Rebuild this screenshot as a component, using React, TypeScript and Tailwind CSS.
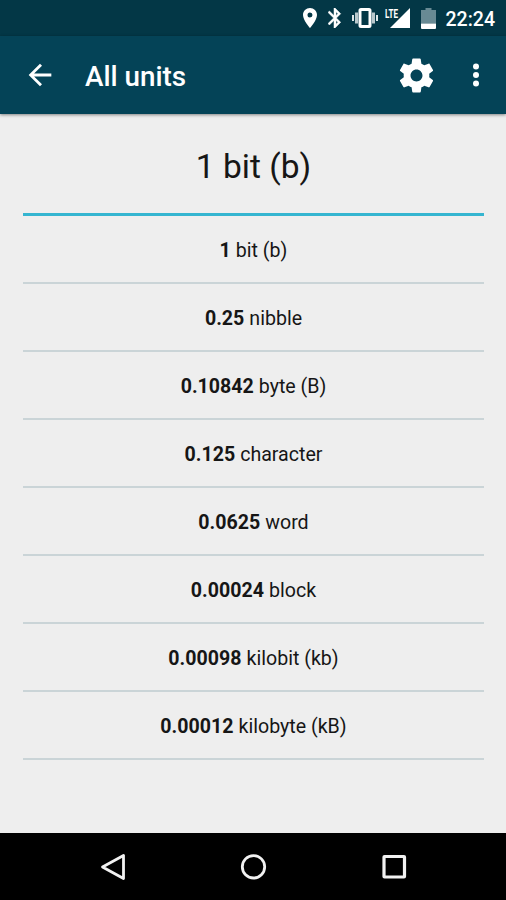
interface Unit {
  value: string;
  name: string;
}

const units: Unit[] = [
  { value: "1", name: "bit (b)" },
  { value: "0.25", name: "nibble" },
  { value: "0.10842", name: "byte (B)" },
  { value: "0.125", name: "character" },
  { value: "0.0625", name: "word" },
  { value: "0.00024", name: "block" },
  { value: "0.00098", name: "kilobit (kb)" },
  { value: "0.00012", name: "kilobyte (kB)" },
];

const StatusBar = () => (
  <div className="flex h-9 items-center justify-end bg-[#033746] pr-[11px] text-white">
    <svg className="mr-[11px] h-5 w-3.5" viewBox="0 0 14 20" fill="currentColor">
      <path
        fillRule="evenodd"
        d="M7 0C3.1 0 0 3.1 0 7c0 5.200 7 13 7 13s7-7.800 7-13c0-3.900-3.100-7-7-7zm0 9.500a2.500 2.500 0 1 1 0-5 2.500 2.500 0 0 1 0 5z"
      />
    </svg>
    <svg
      className="mr-[10px] h-5 w-3.5"
      viewBox="5 2 14 20"
      fill="currentColor"
      stroke="currentColor"
      strokeWidth="0.500"
    >
      <path d="M17.710 7.710L12 2h-1v7.590L6.410 5 5 6.410 10.590 12 5 17.590 6.410 19 11 14.410V22h1l5.710-5.710-4.300-4.290 4.300-4.290zM13 5.830l1.880 1.880L13 9.590V5.830zm1.880 10.460L13 18.170v-3.760l1.880 1.880z" />
    </svg>
    <svg className="mr-[7px] h-5 w-[26px]" viewBox="0 0 26 20">
      <path d="M1 7v6M25 7v6" stroke="#dfe7e9" strokeWidth="2" />
      <path d="M4.500 4.500v11M21.500 4.500v11" stroke="#b9c8cc" strokeWidth="3" />
      <rect
        x="8"
        y="1.500"
        width="10"
        height="17"
        rx="1"
        fill="none"
        stroke="white"
        strokeWidth="3"
      />
    </svg>
    <svg
      className="mr-[11px] h-5 w-[25px] overflow-visible"
      viewBox="0 0 25 20"
      fill="currentColor"
    >
      <path d="M25 0v20H5z" />
      <text
        x="0"
        y="9.500"
        fontSize="12.500"
        fontWeight="700"
        fontFamily="Roboto, sans-serif"
        textLength="13"
        lengthAdjust="spacingAndGlyphs"
        stroke="#033746"
        strokeWidth="1"
        paintOrder="stroke"
      >
        LTE
      </text>
    </svg>
    <svg className="mr-[10px] h-[21px] w-[15px]" viewBox="0 0 15 21">
      <path d="M4.500 0h6v2H15v13.500H0V2h4.500z" fill="#688a94" />
      <path d="M0 15.500h15V20a1 1 0 0 1-1 1H1a1 1 0 0 1-1-1z" fill="white" />
    </svg>
    <span className="pt-[3px] text-[19.500px] leading-none font-medium">22:24</span>
  </div>
);

const AppBar = () => (
  <header className="relative flex h-[78px] items-center bg-[#044357] pr-[27px] pl-[23px] text-white shadow-[0_1px_3px_rgba(0,0,0,0.45)]">
    <button aria-label="Back">
      <svg className="size-[34px]" viewBox="0 0 24 24" fill="currentColor">
        <path d="M20 11H7.830l5.590-5.590L12 4l-8 8 8 8 1.410-1.410L7.830 13H20v-2z" />
      </svg>
    </button>
    <h1 className="ml-7 flex-1 pt-1 text-[27.800px] leading-none font-medium">
      All units
    </h1>
    <button aria-label="Settings" className="mr-9">
      <svg className="size-[41px]" viewBox="0 0 24 24" fill="currentColor">
        <path d="M19.430 12.980c.04-.32.07-.64.07-.98s-.03-.66-.07-.98l2.110-1.650c.19-.15.24-.42.12-.64l-2-3.460c-.12-.22-.39-.3-.61-.22l-2.490 1c-.52-.4-1.080-.73-1.690-.98l-.38-2.650C14.460 2.180 14.250 2 14 2h-4c-.25 0-.46.18-.49.42l-.38 2.650c-.61.25-1.170.59-1.690.98l-2.490-1c-.23-.09-.49 0-.61.22l-2 3.460c-.13.22-.07.49.12.64l2.110 1.650c-.04.32-.07.65-.07.98s.03.66.07.98l-2.110 1.650c-.19.15-.24.42-.12.64l2 3.460c.12.22.39.3.61.22l2.490-1c.52.4 1.080.73 1.690.98l.38 2.650c.03.24.24.42.49.42h4c.25 0 .46-.18.49-.42l.38-2.650c.61-.25 1.170-.59 1.690-.98l2.490 1c.23.09.49 0 .61-.22l2-3.460c.12-.22.07-.49-.12-.64l-2.110-1.650zM12 15.500c-1.930 0-3.500-1.570-3.500-3.500s1.570-3.500 3.500-3.500 3.500 1.570 3.500 3.500-1.570 3.500-3.500 3.500z" />
      </svg>
    </button>
    <button aria-label="More options">
      <svg className="h-6 w-1.5" viewBox="0 0 6 24" fill="currentColor">
        <circle cx="3" cy="3.500" r="3" />
        <circle cx="3" cy="12" r="3" />
        <circle cx="3" cy="20.500" r="3" />
      </svg>
    </button>
  </header>
);

const NavigationBar = () => (
  <nav className="flex h-[67px] items-center justify-between bg-black px-[99px] text-[#f2f2f2]">
    <svg
      className="size-7"
      viewBox="0 0 28 28"
      fill="none"
      stroke="currentColor"
      strokeWidth="2.800"
      strokeLinejoin="round"
    >
      <path d="M24.500 2.500v23L3.500 14z" />
    </svg>
    <svg
      className="size-7"
      viewBox="0 0 28 28"
      fill="none"
      stroke="currentColor"
      strokeWidth="2.800"
    >
      <circle cx="14.500" cy="13.800" r="11.200" />
    </svg>
    <svg
      className="size-7"
      viewBox="0 0 28 28"
      fill="none"
      stroke="currentColor"
      strokeWidth="3.200"
      strokeLinejoin="round"
    >
      <rect x="5" y="3.500" width="20.500" height="20.500" rx="0.500" />
    </svg>
  </nav>
);

export default function App() {
  return (
    <div className="flex h-[900px] w-[506px] flex-col overflow-hidden bg-[#eeeeee] font-[Roboto,sans-serif] text-[#161616]">
      <StatusBar />
      <AppBar />

      <main className="flex-1 pr-[22px] pl-[23px]">
        <h2 className="flex h-[102px] items-center justify-center border-b-3 border-[#35b5d0] pt-1.5 text-[33.500px] leading-none">
          1 bit (b)
        </h2>
        <ul>
          {units.map((unit) => (
            <li
              key={unit.name}
              className="flex h-17 items-center justify-center gap-[5px] border-b-2 border-[#cad4d7] pt-1 text-[19.600px] leading-none"
            >
              <b className="font-bold">{unit.value}</b>
              <span>{unit.name}</span>
            </li>
          ))}
        </ul>
      </main>

      <NavigationBar />
    </div>
  );
}
